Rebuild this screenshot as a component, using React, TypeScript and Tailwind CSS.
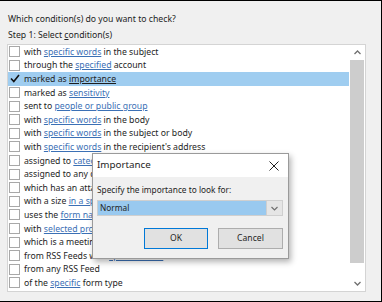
import React from "react";

type Part = { t: string; link?: boolean };
const rows: Part[][] = [
  [{ t: "with " }, { t: "specific words", link: true }, { t: " in the subject" }],
  [{ t: "through the " }, { t: "specified", link: true }, { t: " account" }],
  [{ t: "marked as " }, { t: "importance", link: true }],
  [{ t: "marked as " }, { t: "sensitivity", link: true }],
  [{ t: "sent to " }, { t: "people or public group", link: true }],
  [{ t: "with " }, { t: "specific words", link: true }, { t: " in the body" }],
  [{ t: "with " }, { t: "specific words", link: true }, { t: " in the subject or body" }],
  [{ t: "with " }, { t: "specific words", link: true }, { t: " in the recipient's address" }],
  [{ t: "assigned to " }, { t: "category", link: true }, { t: " category" }],
  [{ t: "assigned to any category" }],
  [{ t: "which has an attachment" }],
  [{ t: "with a size " }, { t: "in a specific range", link: true }],
  [{ t: "uses the " }, { t: "form name", link: true }, { t: " form" }],
  [{ t: "with " }, { t: "selected properties", link: true }, { t: " of documents or forms" }],
  [{ t: "which is a meeting invitation or update" }],
  [{ t: "from RSS Feeds with " }, { t: "specified text", link: true }, { t: " in the title" }],
  [{ t: "from any RSS Feed" }],
  [{ t: "of the " }, { t: "specific", link: true }, { t: " form type" }],
];

export default function App() {
  return (
    <div className="relative w-[382px] h-[302px] overflow-hidden bg-[#f0f0f0] border-t border-r border-b border-black text-[8.7px] text-[#1e1e1e] font-['Noto_Sans',sans-serif]">
      <div className="pl-[8px] pt-[10px] leading-[16px]">Which condition(s) do you want to check?</div>
      <div className="pl-[8px] leading-[16px]">
        Step 1: Select <span className="underline">c</span>ondition(s)
      </div>
      <div className="ml-[7px] mt-[1px] w-[359px] h-[248px] border border-[#d4d4d4] bg-white flex">
        <div className="flex-1 flex flex-col">
          {rows.map((r, i) => {
            const sel = i === 2;
            return (
              <div
                key={i}
                className={`h-[13.6px] flex items-center whitespace-nowrap ${sel ? "bg-[#9fcdf0]" : ""}`}
              >
                <div
                  className={`ml-[1px] w-[11px] h-[11px] flex items-center justify-center ${
                    sel ? "" : "border border-[#a8a8a8] bg-white"
                  }`}
                >
                  {sel && (
                    <svg width="10" height="9" viewBox="0 0 10 9">
                      <path d="M1 4.5 L3.8 7.5 L9 1" fill="none" stroke="#111" strokeWidth="1.6" />
                    </svg>
                  )}
                </div>
                <div className="ml-[4px] leading-[13px] pt-[1px]">
                  {r.map((p, j) =>
                    p.link ? (
                      <span key={j} className={`underline ${sel ? "text-[#1e1e1e]" : "text-[#3b70b5]"}`}>
                        {p.t}
                      </span>
                    ) : (
                      <span key={j}>{p.t}</span>
                    )
                  )}
                </div>
              </div>
            );
          })}
        </div>
        <div className="w-[16px] flex flex-col bg-white">
          <div className="h-[15px] flex items-center justify-center">
            <svg width="7" height="5" viewBox="0 0 7 5">
              <path d="M0.5 4 L3.5 1 L6.5 4" fill="none" stroke="#707070" strokeWidth="1.3" />
            </svg>
          </div>
          <div className="mx-[1px] h-[203px] bg-[#cdcdcd]" />
          <div className="flex-1" />
          <div className="h-[15px] flex items-center justify-center">
            <svg width="7" height="5" viewBox="0 0 7 5">
              <path d="M0.5 1 L3.5 4 L6.5 1" fill="none" stroke="#707070" strokeWidth="1.3" />
            </svg>
          </div>
        </div>
      </div>
      <div className="pl-[8px] pt-[6px] leading-[16px]">
        Step 2: Edit the rule description (click an underlined value):
      </div>

      <div className="absolute left-[92px] top-[152px] w-[197px] h-[106px] border border-[#9a9a9a] bg-[#f0f0f0] shadow-[2px_3px_6px_rgba(0,0,0,0.3)] flex flex-col text-[8.3px]">
        <div className="h-[23px] bg-white flex items-center justify-between pl-[4px] pr-[9px]">
          <span className="text-[9.8px]">Importance</span>
          <svg width="10" height="10" viewBox="0 0 10 10">
            <path d="M0.5 0.5 L9.5 9.5 M9.5 0.5 L0.5 9.5" stroke="#222" strokeWidth="1" />
          </svg>
        </div>
        <div className="px-[4px] pt-[6px]">
          <div className="leading-[13px]">Specify the importance to look for:</div>
          <div className="mt-[4px] h-[16px] w-[186px] flex border border-[#cfcfcf]">
            <div className="flex-1 bg-[#99c9ef] flex items-center pl-[2px]">Normal</div>
            <div className="w-[16px] bg-[#e5e5e5] border-l border-[#cfcfcf] flex items-center justify-center">
              <svg width="7" height="5" viewBox="0 0 7 5">
                <path d="M0.5 1 L3.5 4 L6.5 1" fill="none" stroke="#707070" strokeWidth="1.2" />
              </svg>
            </div>
          </div>
          <div className="mt-[12px] flex justify-end gap-[10px] pr-[1px] text-[8.6px]">
            <div className="w-[64px] h-[21px] bg-[#e1e1e1] border border-[#0078d7] flex items-center justify-center">
              OK
            </div>
            <div className="w-[65px] h-[21px] bg-[#e1e1e1] border border-[#adadad] flex items-center justify-center">
              Cancel
            </div>
          </div>
        </div>
      </div>
    </div>
  );
}
